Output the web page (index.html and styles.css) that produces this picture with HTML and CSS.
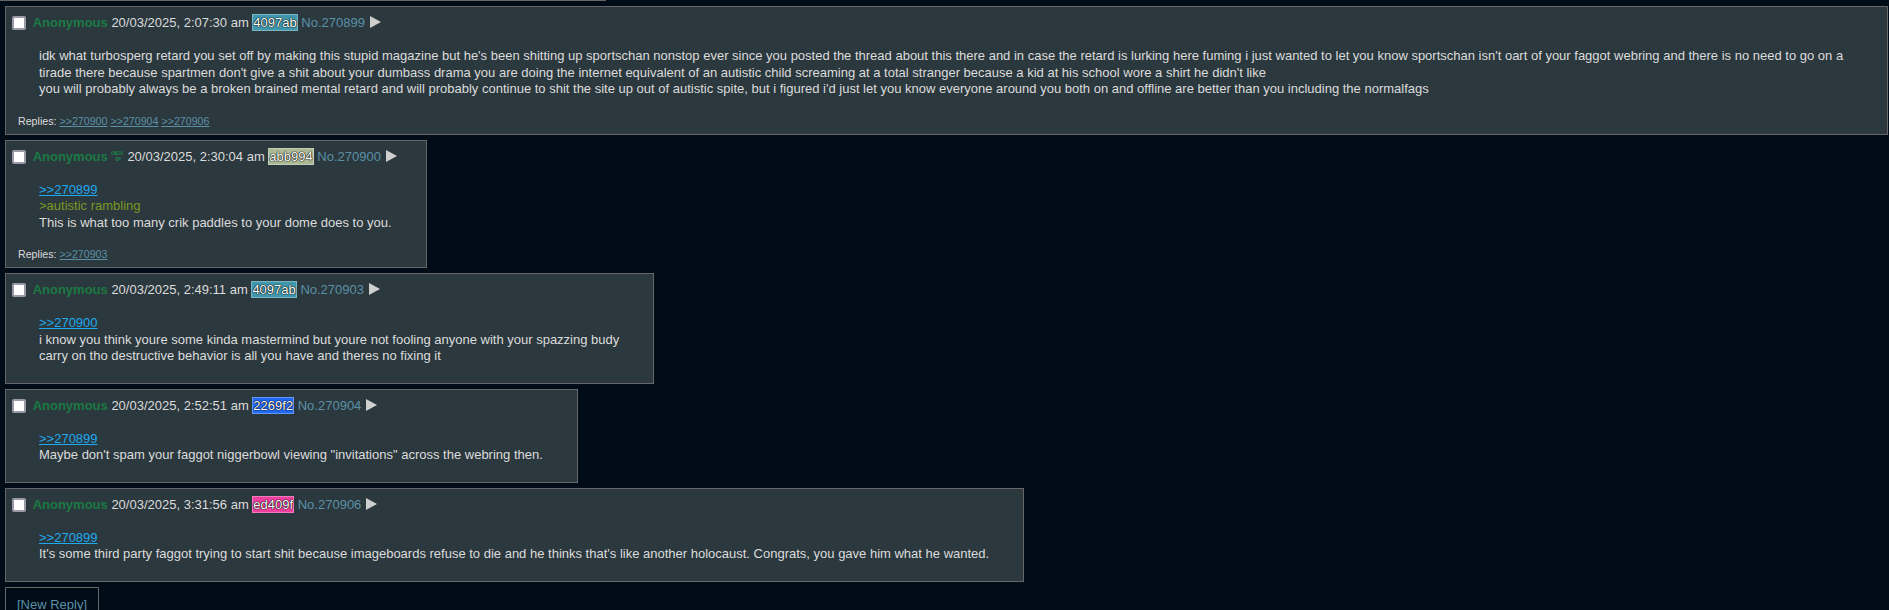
FILE: index.html
```html
<html>
<head>
    <meta charset="UTF-8">
    <meta name="viewport" content="width=device-width, initial-scale=1.0">
    <title>Thread</title>
    <link rel="stylesheet" href="styles.css">
</head>
<body>
    <div class="top-rule"></div>

    <div class="thread">
        <div class="post">
            <div class="post-info">
                <input type="checkbox" class="post-check">
                <span class="post-name">Anonymous</span>
                <span class="post-date">20/03/2025, 2:07:30 am</span>
                <span class="user-id" style="background-color: #4097ab;">4097ab</span>
                <a class="post-number">No.270899</a><span class="post-menu"><svg width="11" height="12" viewBox="0 0 11 12"><polygon points="0,0 11,6 0,12" fill="#cfcfcf"/></svg></span>
            </div>
            <div class="post-message">
                idk what turbosperg retard you set off by making this stupid magazine but he's been shitting up sportschan nonstop ever since you posted the thread about this there and in case the retard is lurking here fuming i just wanted to let you know sportschan isn't oart of your faggot webring and there is no need to go on a tirade there because spartmen don't give a shit about your dumbass drama you are doing the internet equivalent of an autistic child screaming at a total stranger because a kid at his school wore a shirt he didn't like<br>
                you will probably always be a broken brained mental retard and will probably continue to shit the site up out of autistic spite, but i figured i'd just let you know everyone around you both on and offline are better than you including the normalfags
            </div>
            <div class="replies">Replies: <a>&gt;&gt;270900</a> <a>&gt;&gt;270904</a> <a>&gt;&gt;270906</a></div>
        </div>

        <div class="post">
            <div class="post-info">
                <input type="checkbox" class="post-check">
                <span class="post-name">Anonymous</span><span class="check-em"><svg width="14" height="12" viewBox="0 0 14 12"><text x="1" y="5" textLength="12" lengthAdjust="spacingAndGlyphs">CHECK</text><text x="3.5" y="10.5" textLength="7" lengthAdjust="spacingAndGlyphs">'EM</text></svg></span>
                <span class="post-date">20/03/2025, 2:30:04 am</span>
                <span class="user-id" style="background-color: #abb994;">abb994</span>
                <a class="post-number">No.270900</a><span class="post-menu"><svg width="11" height="12" viewBox="0 0 11 12"><polygon points="0,0 11,6 0,12" fill="#cfcfcf"/></svg></span>
            </div>
            <div class="post-message">
                <a class="quote">&gt;&gt;270899</a><br>
                <span class="greentext">&gt;autistic rambling</span><br>
                This is what too many crik paddles to your dome does to you.
            </div>
            <div class="replies">Replies: <a>&gt;&gt;270903</a></div>
        </div>

        <div class="post">
            <div class="post-info">
                <input type="checkbox" class="post-check">
                <span class="post-name">Anonymous</span>
                <span class="post-date">20/03/2025, 2:49:11 am</span>
                <span class="user-id" style="background-color: #4097ab;">4097ab</span>
                <a class="post-number">No.270903</a><span class="post-menu"><svg width="11" height="12" viewBox="0 0 11 12"><polygon points="0,0 11,6 0,12" fill="#cfcfcf"/></svg></span>
            </div>
            <div class="post-message">
                <a class="quote">&gt;&gt;270900</a><br>
                i know you think youre some kinda mastermind but youre not fooling anyone with your spazzing budy<br>
                carry on tho destructive behavior is all you have and theres no fixing it
            </div>
        </div>

        <div class="post">
            <div class="post-info">
                <input type="checkbox" class="post-check">
                <span class="post-name">Anonymous</span>
                <span class="post-date">20/03/2025, 2:52:51 am</span>
                <span class="user-id" style="background-color: #2269f2;">2269f2</span>
                <a class="post-number">No.270904</a><span class="post-menu"><svg width="11" height="12" viewBox="0 0 11 12"><polygon points="0,0 11,6 0,12" fill="#cfcfcf"/></svg></span>
            </div>
            <div class="post-message">
                <a class="quote">&gt;&gt;270899</a><br>
                Maybe don't spam your faggot niggerbowl viewing "invitations" across the webring then.
            </div>
        </div>

        <div class="post">
            <div class="post-info">
                <input type="checkbox" class="post-check">
                <span class="post-name">Anonymous</span>
                <span class="post-date">20/03/2025, 3:31:56 am</span>
                <span class="user-id" style="background-color: #ed409f;">ed409f</span>
                <a class="post-number">No.270906</a><span class="post-menu"><svg width="11" height="12" viewBox="0 0 11 12"><polygon points="0,0 11,6 0,12" fill="#cfcfcf"/></svg></span>
            </div>
            <div class="post-message">
                <a class="quote">&gt;&gt;270899</a><br>
                It's some third party faggot trying to start shit because imageboards refuse to die and he thinks that's like another holocaust. Congrats, you gave him what he wanted.
            </div>
        </div>

        <div class="new-reply"><a>[New Reply]</a></div>
    </div>
</body>
</html>
```

FILE: styles.css
```css
body {
    margin: 0;
    background-color: #000c17;
    color: #dcdcdc;
    font-family: "Liberation Sans", Arial, sans-serif;
    font-size: 13px;
    overflow: hidden;
}

a {
    cursor: pointer;
}

.top-rule {
    width: 606px;
    height: 1px;
    background-color: #666;
}

.thread {
    display: flex;
    flex-direction: column;
    align-items: flex-start;
    gap: 5px;
    padding: 5px 1px 0 5px;
}

.post {
    max-width: 100%;
    box-sizing: border-box;
    background-color: #2b383e;
    border: 1px solid #666;
    padding: 8px 2px 5px 2px;
}

.post-info {
    line-height: 16px;
    white-space: nowrap;
}

.post-check {
    appearance: none;
    -webkit-appearance: none;
    box-sizing: border-box;
    width: 14px;
    height: 14px;
    margin: 0 3px 0 4px;
    vertical-align: -3px;
    background-color: #fff;
    border: 2px solid #9b99a8;
    border-radius: 2px;
}

.post-name {
    color: #1b7a44;
    font-weight: bold;
}

.check-em {
    display: inline-block;
    vertical-align: top;
    margin: 1px 0 0 2px;
}

.check-em svg {
    display: block;
    overflow: visible;
}

.check-em text {
    font-family: "DejaVu Sans Mono", monospace;
    font-size: 5px;
    font-weight: bold;
    fill: #1b8a48;
}

.user-id {
    color: #fff;
    padding: 0;
    border: 1px solid rgba(255, 255, 255, 0.3);
    text-shadow: 0 0 1px #000, 0 0 1px #000, 0 0 1px #000;
}

.post-number {
    color: #5b90a6;
}

.post-menu {
    display: inline-block;
    margin-left: 5px;
    vertical-align: -1px;
}

.post-menu svg {
    display: block;
}

.post-message {
    margin: 17px 32px 13px 31px;
    line-height: 16.5px;
}

.quote {
    color: #1fa9ee;
    text-decoration: underline;
}

.greentext {
    color: #789922;
}

.replies {
    margin-left: 10px;
    padding-top: 3px;
    font-size: 10.67px;
    line-height: 15px;
}

.replies a {
    color: #5b90a6;
    text-decoration: underline;
}

.new-reply {
    border: 1px solid #666;
    padding: 9px 11px;
    line-height: 16px;
}

.new-reply a {
    color: #5b90a6;
}
```
